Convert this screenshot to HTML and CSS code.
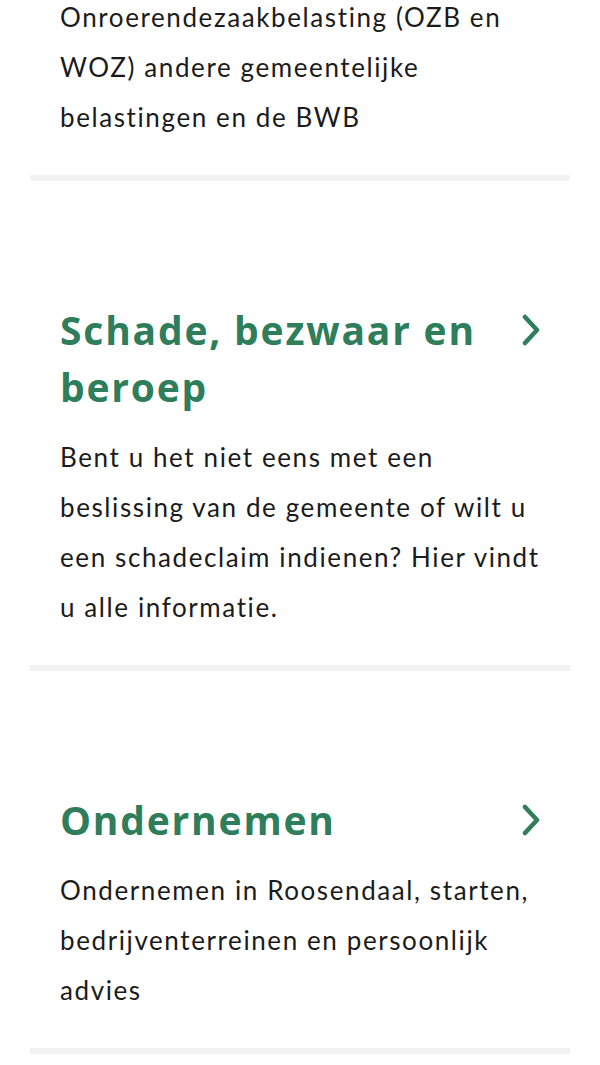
FILE: index.html
```html
<!DOCTYPE html>
<html>
<head>
    <title>Onderwerpen</title>
    <link rel="stylesheet" href="styles.css">
</head>
<body>
    <ul class="topic-list">
        <li class="topic topic-cut">
            <p class="topic-text">Onroerendezaakbelasting (OZB en WOZ) andere gemeentelijke belastingen en de BWB</p>
        </li>
        <li class="topic">
            <a class="topic-head" href="#">
                <h2>Schade, bezwaar en beroep</h2>
                <span class="chevron">
                    <svg width="18" height="32" viewBox="0 0 18 32"><path d="M3 3 L15 16 L3 29" fill="none" stroke="currentColor" stroke-width="4.5" stroke-linecap="round" stroke-linejoin="round"/></svg>
                </span>
            </a>
            <p class="topic-text">Bent u het niet eens met een beslissing van de gemeente of wilt u een schadeclaim indienen? Hier vindt u alle informatie.</p>
        </li>
        <li class="topic">
            <a class="topic-head" href="#">
                <h2>Ondernemen</h2>
                <span class="chevron">
                    <svg width="18" height="32" viewBox="0 0 18 32"><path d="M3 3 L15 16 L3 29" fill="none" stroke="currentColor" stroke-width="4.5" stroke-linecap="round" stroke-linejoin="round"/></svg>
                </span>
            </a>
            <p class="topic-text">Ondernemen in Roosendaal, starten, bedrijventerreinen en persoonlijk advies</p>
        </li>
    </ul>
</body>
</html>
```

FILE: styles.css
```css
body { margin: 0; background: #fff; font-family: Lato, "Noto Sans", sans-serif; color: #1b1b1b; }
.topic-list { list-style: none; margin: 0; padding: 0 30px; }
.topic { padding: 120px 30px 33px; border-bottom: 6px solid #f2f2f2; }
.topic-cut { padding-top: 0; margin-top: -8px; }
.topic-head { display: flex; justify-content: space-between; align-items: flex-start; gap: 20px; color: #2e7d5b; text-decoration: none; }
.topic-head h2 { margin: 0; font-family: "Open Sans", sans-serif; font-size: 39px; font-weight: 700; line-height: 57px; letter-spacing: 1.8px; }
.chevron { display: flex; align-items: center; height: 57px; }
.topic-text { margin: 17px 0 0; font-size: 26px; line-height: 50px; letter-spacing: 1.6px; font-variant-ligatures: none; }
.topic-cut .topic-text { margin-top: 0; }
```
